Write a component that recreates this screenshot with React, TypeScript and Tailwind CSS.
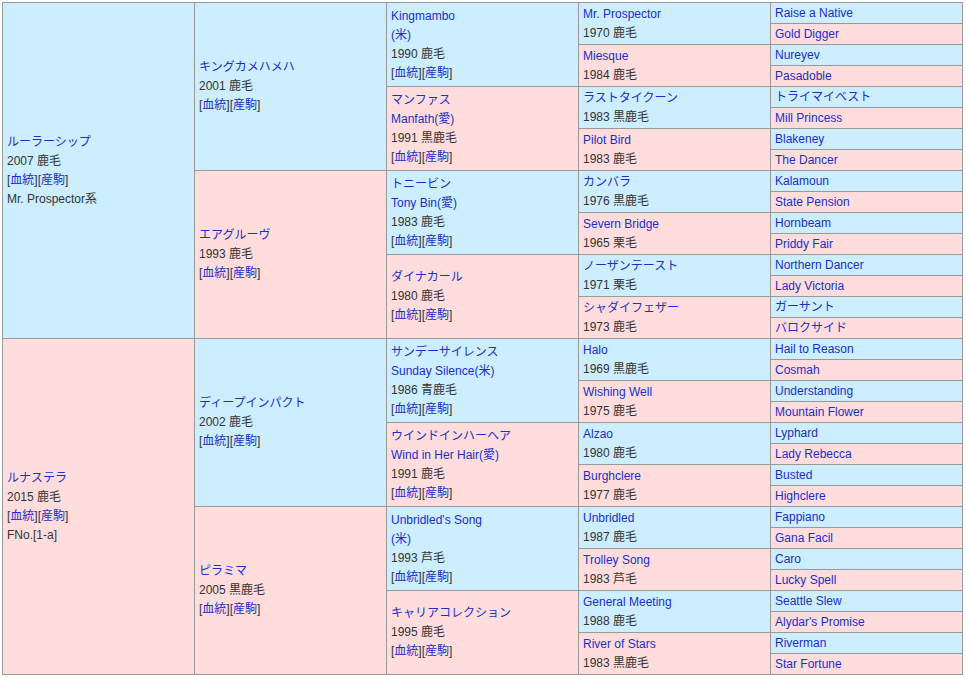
import React from "react";

type C = { lines: (string | [string, "l"] | "links")[] };
const L = (s: string): [string, "l"] => [s, "l"];

const g1: C[] = [
  { lines: [L("ルーラーシップ"), "2007 鹿毛", "links", "Mr. Prospector系"] },
  { lines: [L("ルナステラ"), "2015 鹿毛", "links", "FNo.[1-a]"] },
];
const g2: C[] = [
  { lines: [L("キングカメハメハ"), "2001 鹿毛", "links"] },
  { lines: [L("エアグルーヴ"), "1993 鹿毛", "links"] },
  { lines: [L("ディープインパクト"), "2002 鹿毛", "links"] },
  { lines: [L("ピラミマ"), "2005 黒鹿毛", "links"] },
];
const g3: C[] = [
  { lines: [L("Kingmambo"), L("(米)"), "1990 鹿毛", "links"] },
  { lines: [L("マンファス"), L("Manfath(愛)"), "1991 黒鹿毛", "links"] },
  { lines: [L("トニービン"), L("Tony Bin(愛)"), "1983 鹿毛", "links"] },
  { lines: [L("ダイナカール"), "1980 鹿毛", "links"] },
  { lines: [L("サンデーサイレンス"), L("Sunday Silence(米)"), "1986 青鹿毛", "links"] },
  { lines: [L("ウインドインハーヘア"), L("Wind in Her Hair(愛)"), "1991 鹿毛", "links"] },
  { lines: [L("Unbridled's Song"), L("(米)"), "1993 芦毛", "links"] },
  { lines: [L("キャリアコレクション"), "1995 鹿毛", "links"] },
];
const g4raw: [string, string][] = [
  ["Mr. Prospector", "1970 鹿毛"], ["Miesque", "1984 鹿毛"], ["ラストタイクーン", "1983 黒鹿毛"], ["Pilot Bird", "1983 鹿毛"],
  ["カンバラ", "1976 黒鹿毛"], ["Severn Bridge", "1965 栗毛"], ["ノーザンテースト", "1971 栗毛"], ["シャダイフェザー", "1973 鹿毛"],
  ["Halo", "1969 黒鹿毛"], ["Wishing Well", "1975 鹿毛"], ["Alzao", "1980 鹿毛"], ["Burghclere", "1977 鹿毛"],
  ["Unbridled", "1987 鹿毛"], ["Trolley Song", "1983 芦毛"], ["General Meeting", "1988 鹿毛"], ["River of Stars", "1983 黒鹿毛"],
];
const g4: C[] = g4raw.map(([n, y]) => ({ lines: [L(n), y] }));
const g5: C[] = [
  "Raise a Native", "Gold Digger", "Nureyev", "Pasadoble", "トライマイベスト", "Mill Princess", "Blakeney", "The Dancer",
  "Kalamoun", "State Pension", "Hornbeam", "Priddy Fair", "Northern Dancer", "Lady Victoria", "ガーサント", "バロクサイド",
  "Hail to Reason", "Cosmah", "Understanding", "Mountain Flower", "Lyphard", "Lady Rebecca", "Busted", "Highclere",
  "Fappiano", "Gana Facil", "Caro", "Lucky Spell", "Seattle Slew", "Alydar's Promise", "Riverman", "Star Fortune",
].map((n) => ({ lines: [L(n)] }));

const gens = [g1, g2, g3, g4, g5];

function Cell({ c, idx, span }: { c: C; idx: number; span: number }) {
  const bg = idx % 2 === 0 ? "bg-[#cceeff]" : "bg-[#ffdddd]";
  return (
    <td rowSpan={span} className={`${bg} border border-[#999999] px-[4px] align-middle w-[192px] leading-[19px]`}>
      {c.lines.map((l, i) =>
        l === "links" ? (
          <div key={i}>
            [<span className="text-[#1a2fc8]">血統</span>][<span className="text-[#1a2fc8]">産駒</span>]
          </div>
        ) : Array.isArray(l) ? (
          <div key={i} className="text-[#1a2fc8] whitespace-nowrap">{l[0]}</div>
        ) : (
          <div key={i} className="whitespace-nowrap">{l}</div>
        )
      )}
    </td>
  );
}

export default function App() {
  const rows = [];
  for (let r = 0; r < 32; r++) {
    const cells = [];
    for (let g = 0; g < 5; g++) {
      const span = 32 >> (g + 1);
      if (r % span === 0) {
        const idx = r / span;
        cells.push(<Cell key={g} c={gens[g][idx]} idx={idx} span={span} />);
      }
    }
    rows.push(<tr key={r} className="h-[21px]">{cells}</tr>);
  }
  return (
    <div className="p-[2px] bg-white">
      <table
        className="border-collapse w-[961px] text-[12px] text-[#333333] table-fixed"
        style={{ fontFamily: '"Liberation Sans","Noto Sans CJK JP",sans-serif' }}
      >
        <tbody>{rows}</tbody>
      </table>
    </div>
  );
}
